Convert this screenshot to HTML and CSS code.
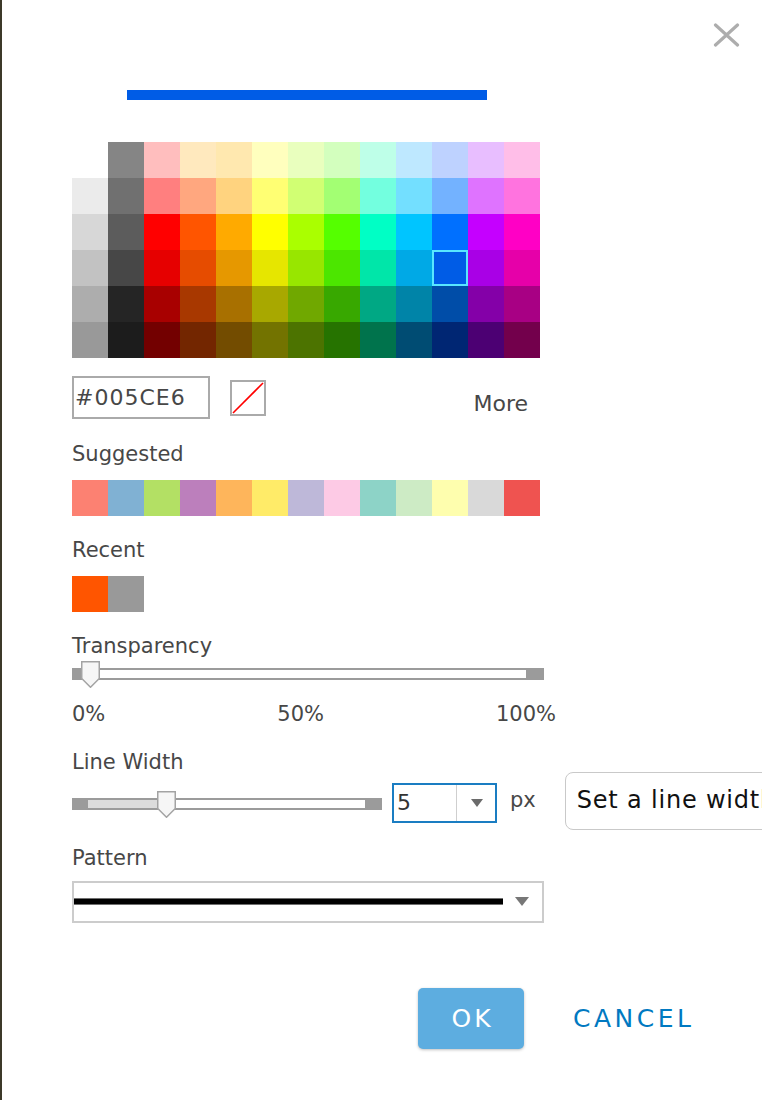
FILE: index.html
```html
<!DOCTYPE html>
<html lang="en">
<head>
<meta charset="utf-8">
<title>Color picker</title>
<link rel="stylesheet" href="styles.css">
</head>
<body>
<div class="page">
  <div class="topbar">
    <button class="close" aria-label="Close">
      <svg width="27" height="24" viewBox="0 0 27 24"><path d="M2.5 2 L24.5 22 M24.5 2 L2.5 22" stroke="#adadad" stroke-width="3.2" fill="none" stroke-linecap="round"/></svg>
    </button>
  </div>
  <div class="content">
    <div class="preview"><div class="preview-line"></div></div>

    <div class="palette">
      <div class="cell" style="background:#ffffff"></div>
      <div class="cell" style="background:#858585"></div>
      <div class="cell" style="background:#ffbebe"></div>
      <div class="cell" style="background:#ffe9be"></div>
      <div class="cell" style="background:#ffe8af"></div>
      <div class="cell" style="background:#ffffbe"></div>
      <div class="cell" style="background:#e9ffbe"></div>
      <div class="cell" style="background:#d3ffbe"></div>
      <div class="cell" style="background:#beffe8"></div>
      <div class="cell" style="background:#bee8ff"></div>
      <div class="cell" style="background:#bed2ff"></div>
      <div class="cell" style="background:#e8beff"></div>
      <div class="cell" style="background:#ffbee8"></div>

      <div class="cell" style="background:#ebebeb"></div>
      <div class="cell" style="background:#707070"></div>
      <div class="cell" style="background:#ff7f7f"></div>
      <div class="cell" style="background:#ffa77f"></div>
      <div class="cell" style="background:#ffd37f"></div>
      <div class="cell" style="background:#ffff73"></div>
      <div class="cell" style="background:#d1ff73"></div>
      <div class="cell" style="background:#a3ff73"></div>
      <div class="cell" style="background:#73ffdf"></div>
      <div class="cell" style="background:#73dfff"></div>
      <div class="cell" style="background:#73b2ff"></div>
      <div class="cell" style="background:#df73ff"></div>
      <div class="cell" style="background:#ff73df"></div>

      <div class="cell" style="background:#d7d7d7"></div>
      <div class="cell" style="background:#5c5c5c"></div>
      <div class="cell" style="background:#ff0000"></div>
      <div class="cell" style="background:#ff5500"></div>
      <div class="cell" style="background:#ffaa00"></div>
      <div class="cell" style="background:#ffff00"></div>
      <div class="cell" style="background:#aaff00"></div>
      <div class="cell" style="background:#55ff00"></div>
      <div class="cell" style="background:#00ffc5"></div>
      <div class="cell" style="background:#00c5ff"></div>
      <div class="cell" style="background:#0070ff"></div>
      <div class="cell" style="background:#c500ff"></div>
      <div class="cell" style="background:#ff00c5"></div>

      <div class="cell" style="background:#c2c2c2"></div>
      <div class="cell" style="background:#474747"></div>
      <div class="cell" style="background:#e60000"></div>
      <div class="cell" style="background:#e64c00"></div>
      <div class="cell" style="background:#e69800"></div>
      <div class="cell" style="background:#e6e600"></div>
      <div class="cell" style="background:#98e600"></div>
      <div class="cell" style="background:#4ce600"></div>
      <div class="cell" style="background:#00e6a9"></div>
      <div class="cell" style="background:#00a9e6"></div>
      <div class="cell selected" style="background:#005ce6"></div>
      <div class="cell" style="background:#a900e6"></div>
      <div class="cell" style="background:#e600a9"></div>

      <div class="cell" style="background:#adadad"></div>
      <div class="cell" style="background:#252525"></div>
      <div class="cell" style="background:#a80000"></div>
      <div class="cell" style="background:#a83800"></div>
      <div class="cell" style="background:#a87000"></div>
      <div class="cell" style="background:#a8a800"></div>
      <div class="cell" style="background:#70a800"></div>
      <div class="cell" style="background:#38a800"></div>
      <div class="cell" style="background:#00a884"></div>
      <div class="cell" style="background:#0084a8"></div>
      <div class="cell" style="background:#004da8"></div>
      <div class="cell" style="background:#8400a8"></div>
      <div class="cell" style="background:#a80084"></div>

      <div class="cell" style="background:#999999"></div>
      <div class="cell" style="background:#1c1c1c"></div>
      <div class="cell" style="background:#730000"></div>
      <div class="cell" style="background:#732600"></div>
      <div class="cell" style="background:#734c00"></div>
      <div class="cell" style="background:#737300"></div>
      <div class="cell" style="background:#4c7300"></div>
      <div class="cell" style="background:#267300"></div>
      <div class="cell" style="background:#00734c"></div>
      <div class="cell" style="background:#004c73"></div>
      <div class="cell" style="background:#002673"></div>
      <div class="cell" style="background:#4c0073"></div>
      <div class="cell" style="background:#73004c"></div>
    </div>

    <div class="hex-row">
      <div class="hex-input">#005CE6</div>
      <div class="no-color">
        <svg width="32" height="32" viewBox="0 0 32 32"><path d="M1 31 L31 1" stroke="#ff0000" stroke-width="1.6"/></svg>
      </div>
      <div class="more">More</div>
    </div>

    <div class="label">Suggested</div>
    <div class="swatches">
      <div class="cell" style="background:#fc8172"></div>
      <div class="cell" style="background:#80b1d3"></div>
      <div class="cell" style="background:#b3e064"></div>
      <div class="cell" style="background:#bc7fbc"></div>
      <div class="cell" style="background:#feb55b"></div>
      <div class="cell" style="background:#ffeb68"></div>
      <div class="cell" style="background:#beb8d9"></div>
      <div class="cell" style="background:#fdcae5"></div>
      <div class="cell" style="background:#8dd3c7"></div>
      <div class="cell" style="background:#cdebc5"></div>
      <div class="cell" style="background:#fefeae"></div>
      <div class="cell" style="background:#d9d9d9"></div>
      <div class="cell" style="background:#ef5350"></div>
    </div>

    <div class="label">Recent</div>
    <div class="swatches">
      <div class="cell" style="background:#ff5500"></div>
      <div class="cell" style="background:#999999"></div>
    </div>

    <div class="label">Transparency</div>
    <div class="slider slider-transparency">
      <div class="track track-transparency"><div class="track-inner"></div></div>
      <svg class="thumb thumb-transparency" width="19" height="27" viewBox="0 0 19 27"><polygon points="0.75,0.75 18.25,0.75 18.25,17.5 9.5,26.25 0.75,17.5" fill="#f6f6f6" stroke="#a3a3a3" stroke-width="1.5"/></svg>
    </div>
    <div class="scale"><span>0%</span><span>50%</span><span>100%</span></div>

    <div class="label">Line Width</div>
    <div class="lw-row">
      <div class="slider slider-lw">
        <div class="track track-lw"><div class="track-inner"><div class="track-fill" style="width:78px"></div></div></div>
        <svg class="thumb thumb-lw" width="19" height="27" viewBox="0 0 19 27"><polygon points="0.75,0.75 18.25,0.75 18.25,17.5 9.5,26.25 0.75,17.5" fill="#f6f6f6" stroke="#a3a3a3" stroke-width="1.5"/></svg>
      </div>
      <div class="num-input">
        <span class="num-value">5</span>
        <span class="num-arrow"><svg width="12" height="8" viewBox="0 0 12 8"><polygon points="0,0 12,0 6,8" fill="#6b6b6b"/></svg></span>
      </div>
      <span class="unit">px</span>
      <div class="hint-box">Set a line width</div>
    </div>

    <div class="label">Pattern</div>
    <div class="pattern-select">
      <div class="pattern-line"></div>
      <svg class="pattern-arrow" width="14" height="9" viewBox="0 0 14 9"><polygon points="0,0 14,0 7,9" fill="#777"/></svg>
    </div>

    <div class="buttons">
      <button class="btn-ok">OK</button>
      <button class="btn-cancel">CANCEL</button>
    </div>
  </div>
</div>
</body>
</html>
```

FILE: styles.css
```css
html, body {
  margin: 0;
  padding: 0;
  background: #ffffff;
}

body {
  font-family: "DejaVu Sans", "Noto Sans", sans-serif;
  color: #474747;
}

.page {
  box-sizing: border-box;
  width: 762px;
  height: 1100px;
  border-left: 2px solid #3c3929;
  overflow: hidden;
}

.topbar {
  display: flex;
  justify-content: flex-end;
  padding: 23px 22px 0 0;
  height: 24px;
}

.close {
  border: 0;
  padding: 0;
  margin: 0;
  background: transparent;
  width: 27px;
  height: 24px;
  display: block;
}

.close svg {
  display: block;
}

.content {
  padding-left: 70px;
  display: flex;
  flex-direction: column;
  align-items: flex-start;
}

.preview {
  margin-top: 43px;
  width: 468px;
  height: 10px;
  display: flex;
  justify-content: center;
}

.preview-line {
  width: 360px;
  height: 10px;
  background: #005ce6;
  margin-left: 2px;
}

.palette {
  margin-top: 42px;
  display: grid;
  grid-template-columns: repeat(13, 36px);
  grid-auto-rows: 36px;
}

.cell {
  width: 36px;
  height: 36px;
  box-sizing: border-box;
}

.cell.selected {
  box-shadow: inset 0 0 0 2px #58e6ff;
}

.hex-row {
  margin-top: 18px;
  width: 468px;
  height: 43px;
  display: flex;
  align-items: center;
}

.hex-input {
  box-sizing: border-box;
  width: 138px;
  height: 43px;
  border: 2px solid #aaaaaa;
  padding-left: 1px;
  font-size: 22px;
  letter-spacing: 1px;
  line-height: 39px;
  color: #474747;
}

.no-color {
  box-sizing: border-box;
  margin-left: 20px;
  width: 36px;
  height: 36px;
  border: 2px solid #aaaaaa;
  background: #fff;
}

.no-color svg {
  display: block;
}

.more {
  margin-left: auto;
  margin-right: 12px;
  margin-top: 12px;
  font-size: 22px;
  line-height: 26px;
  color: #474747;
}

.label {
  font-size: 21px;
  line-height: 26px;
  color: #474747;
}

.hex-row + .label {
  margin-top: 22px;
}

.swatches {
  margin-top: 13px;
  display: flex;
}

.swatches + .label {
  margin-top: 21px;
}

.slider {
  position: relative;
  height: 27px;
}

.slider-transparency {
  margin-top: 2px;
  width: 472px;
}

.track {
  box-sizing: border-box;
  margin-top: 7px;
  height: 12px;
  background: #9b9b9b;
  padding: 2px 18px 2px 14px;
}

.track-lw {
  padding: 2px 17px 2px 16px;
}

.track-inner {
  height: 8px;
  background: #ffffff;
  display: flex;
}

.track-fill {
  height: 8px;
  background: #dcdcdc;
}

.thumb {
  position: absolute;
  top: 0;
  display: block;
}

.thumb-transparency {
  left: 9px;
}

.thumb-lw {
  left: 85px;
}

.scale {
  margin-top: 13px;
  width: 484px;
  display: flex;
  justify-content: space-between;
  font-size: 21px;
  line-height: 26px;
  color: #474747;
}

.scale + .label {
  margin-top: 22px;
}

.lw-row {
  margin-top: -3px;
  height: 58px;
  display: flex;
  align-items: flex-start;
}

.slider-lw {
  width: 310px;
  margin-top: 19px;
  flex-shrink: 0;
}

.num-input {
  box-sizing: border-box;
  margin-top: 11px;
  margin-left: 10px;
  width: 105px;
  height: 40px;
  border: 2px solid #1a7dc2;
  display: flex;
  flex-shrink: 0;
}

.num-value {
  flex: 1;
  padding-left: 3px;
  font-size: 22px;
  line-height: 36px;
  color: #333333;
}

.num-arrow {
  width: 38px;
  border-left: 1px solid #cfcfcf;
  display: flex;
  align-items: center;
  justify-content: center;
}

.num-arrow svg {
  display: block;
  margin-left: 2px;
}

.unit {
  margin-left: 13px;
  margin-top: 15px;
  font-size: 21px;
  line-height: 26px;
  color: #474747;
  flex-shrink: 0;
}

.hint-box {
  box-sizing: border-box;
  flex-shrink: 0;
  margin-left: 29px;
  width: 320px;
  height: 58px;
  border: 1.5px solid #c9c9c9;
  border-radius: 8px;
  padding-left: 11px;
  font-size: 24px;
  letter-spacing: 0.8px;
  line-height: 55px;
  color: #111111;
  white-space: nowrap;
}

.lw-row + .label {
  margin-top: 15px;
}

.pattern-select {
  box-sizing: border-box;
  margin-top: 10px;
  width: 472px;
  height: 42px;
  border: 2px solid #cccccc;
  display: flex;
  align-items: center;
  padding-left: 0;
}

.pattern-line {
  width: 429px;
  height: 5px;
  background: #000;
  border-top: 1px solid #6f6f6f;
  border-bottom: 1px solid #6f6f6f;
  margin-top: -2px;
}

.pattern-arrow {
  display: block;
  margin-left: 12px;
  margin-top: -1px;
}

.buttons {
  margin-top: 65px;
  margin-left: 346px;
  display: flex;
  align-items: center;
}

.btn-ok {
  width: 106px;
  height: 61px;
  border: 0;
  border-radius: 5px;
  background: #5dade0;
  box-shadow: 0 1px 3px rgba(0, 0, 0, 0.25);
  color: #ffffff;
  font-family: "DejaVu Sans", "Noto Sans", sans-serif;
  font-size: 25px;
  letter-spacing: 3px;
  padding: 0 0 0 3px;
}

.btn-cancel {
  margin-left: 49px;
  border: 0;
  background: transparent;
  padding: 0;
  color: #0079c1;
  font-family: "DejaVu Sans", "Noto Sans", sans-serif;
  font-size: 25px;
  letter-spacing: 3.5px;
}
```
